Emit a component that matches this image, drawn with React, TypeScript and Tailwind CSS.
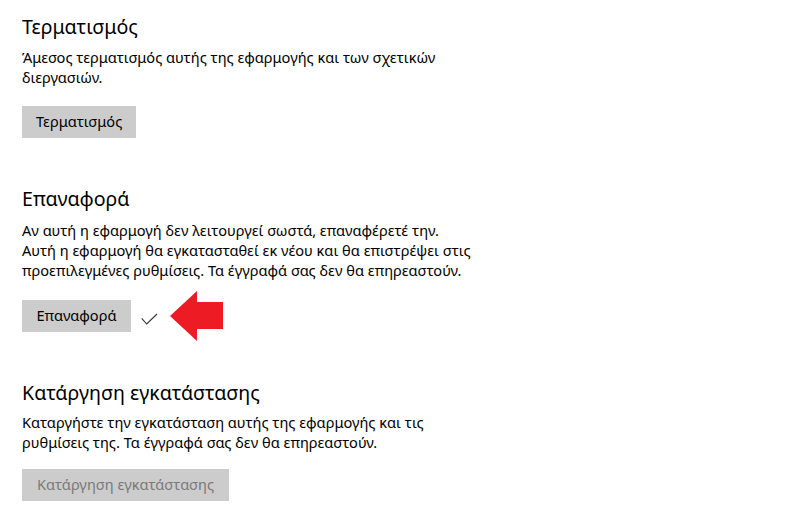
export default function App() {
  return (
    <div className="min-h-[522px] w-[788px] bg-white pl-[22px] pt-[13px] text-black [font-family:'Noto_Sans','Open_Sans',sans-serif]">
      <section>
        <h2 className="text-[19.6px] leading-[28px] font-normal">Τερματισμός</h2>
        <p className="mt-[6px] text-[14.6px] leading-[20px] whitespace-nowrap">
          Άμεσος τερματισμός αυτής της εφαρμογής και των σχετικών
          <br />
          διεργασιών.
        </p>
        <button className="mt-[19px] h-[32px] bg-[#cccccc] px-[14px] text-[14.6px] text-black">
          Τερματισμός
        </button>
      </section>

      <section className="mt-[47px]">
        <h2 className="text-[19.6px] leading-[28px] font-normal">Επαναφορά</h2>
        <p className="mt-[7px] text-[14.6px] leading-[20px] whitespace-nowrap">
          Αν αυτή η εφαρμογή δεν λειτουργεί σωστά, επαναφέρετέ την.
          <br />
          Αυτή η εφαρμογή θα εγκατασταθεί εκ νέου και θα επιστρέψει στις
          <br />
          προεπιλεγμένες ρυθμίσεις. Τα έγγραφά σας δεν θα επηρεαστούν.
        </p>
        <div className="relative mt-[20px] flex items-center">
          <button className="h-[32px] w-[109px] bg-[#cccccc] text-[14.6px] text-black">
            Επαναφορά
          </button>
          <svg width="18" height="14" viewBox="0 0 18 14" className="ml-[10px] mt-[8px]" fill="none">
            <path d="M0.7 5.3 L5.7 11 L16 1" stroke="#333" strokeWidth="1.1" />
          </svg>
          <svg
            width="54"
            height="51"
            viewBox="0 0 54 51"
            className="absolute left-[148px] top-[-9px]"
          >
            <polygon points="0,25 27,0 27,11 53,11 53,38 27,38 27,50" fill="#ed1c24" />
          </svg>
        </div>
      </section>

      <section className="mt-[47px]">
        <h2 className="text-[19.6px] leading-[28px] font-normal">Κατάργηση εγκατάστασης</h2>
        <p className="mt-[5px] text-[14.6px] leading-[20px] whitespace-nowrap">
          Καταργήστε την εγκατάσταση αυτής της εφαρμογής και τις
          <br />
          ρυθμίσεις της. Τα έγγραφά σας δεν θα επηρεαστούν.
        </p>
        <button className="mt-[17px] h-[32px] w-[207px] bg-[#cccccc] text-[14.6px] text-[#7a7a7a]">
          Κατάργηση εγκατάστασης
        </button>
      </section>
    </div>
  );
}
